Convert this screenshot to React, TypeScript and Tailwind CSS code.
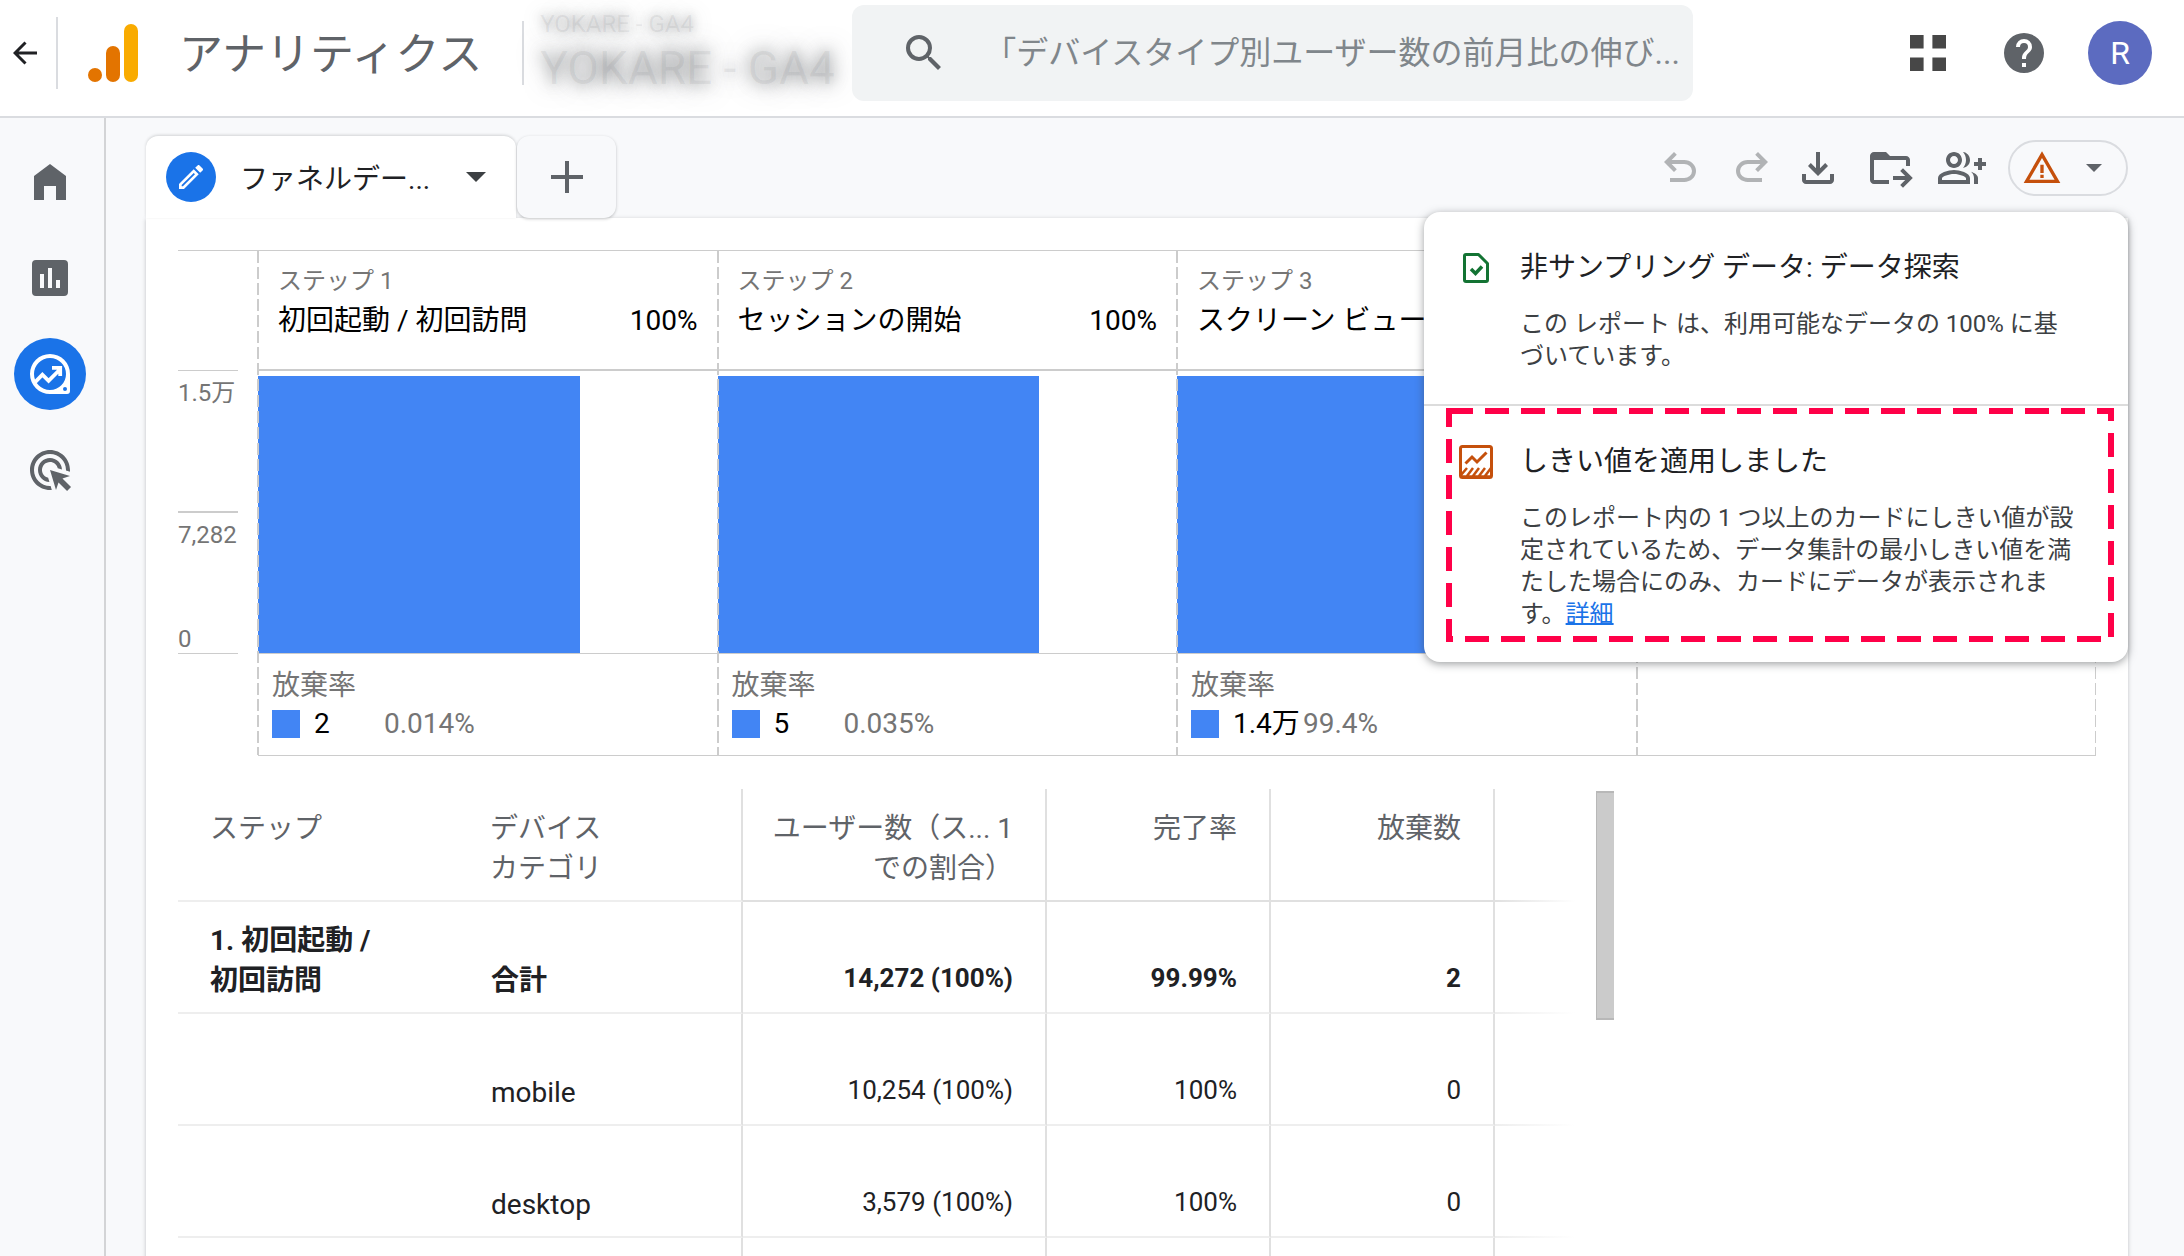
import React from 'react';
import clsx from 'clsx';

type IconProps = { d: string; className?: string };

function Icon({ d, className = 'size-12' }: IconProps) {
  return (
    <svg viewBox="0 0 24 24" fill="currentColor" fillRule="evenodd" className={clsx('shrink-0', className)} aria-hidden="true">
      <path d={d} />
    </svg>
  );
}

const paths = {
  search: 'M15.5 14h-.79l-.28-.27A6.47 6.47 0 0 0 16 9.5 6.5 6.5 0 1 0 9.5 16c1.61 0 3.09-.59 4.23-1.57l.27.28v.79l5 4.99L20.49 19zm-6 0a4.5 4.5 0 1 1 0-9 4.5 4.5 0 0 1 0 9z',
  apps: 'M3 3h6.8v6.8H3zM14.2 3H21v6.8h-6.8zM3 14.2h6.8V21H3zM14.2 14.2H21V21h-6.8z',
  help: 'M12 2a10 10 0 1 0 0 20 10 10 0 0 0 0-20zm1 17h-2v-2h2zm2.07-7.75-.9.92C13.45 12.9 13 13.5 13 15h-2v-.5c0-1.1.45-2.1 1.17-2.83l1.24-1.26c.37-.36.59-.86.59-1.41a2 2 0 1 0-4 0H8a4 4 0 1 1 8 0c0 .88-.36 1.68-.93 2.25z',
  home: 'M4 21V9l8-6 8 6v12h-5v-7H9v7z',
  reports: 'M5 3h14a2 2 0 0 1 2 2v14a2 2 0 0 1-2 2H5a2 2 0 0 1-2-2V5a2 2 0 0 1 2-2zm2 7v7h2v-7zm4-3v10h2V7zm4 6v4h2v-4z',
  ads: 'M11.71 17.99C8.53 17.84 6 15.22 6 12c0-3.31 2.69-6 6-6 3.22 0 5.84 2.53 5.99 5.71l-2.1-.63C15.48 9.31 13.89 8 12 8c-2.21 0-4 1.79-4 4 0 1.89 1.31 3.48 3.08 3.89zM22 12c0 .3-.01.6-.04.9l-1.97-.59c.01-.1.01-.21.01-.31 0-4.42-3.58-8-8-8s-8 3.58-8 8 3.58 8 8 8c.1 0 .21 0 .31-.01l.59 1.97c-.3.03-.6.04-.9.04-5.52 0-10-4.48-10-10S6.48 2 12 2s10 4.48 10 10zm-3.77 4.26L22 15l-10-3 3 10 1.26-3.77 4.27 4.27 1.98-1.98z',
  edit: 'M14.06 9.02l.92.92L5.92 19H5v-.92l9.06-9.06M17.66 3c-.25 0-.51.1-.7.29l-1.83 1.83 3.75 3.75 1.83-1.83a.996.996 0 0 0 0-1.41l-2.34-2.34c-.2-.2-.45-.29-.71-.29zm-3.6 3.19L3 17.25V21h3.75L17.81 9.94z',
  plus: 'M11 4h2v7h7v2h-7v7h-2v-7H4v-2h7z',
  undo: 'M7 19v-2h7.1q1.575 0 2.738-1T18 13.5 16.838 11 14.1 10H7.8l2.6 2.6L9 14 4 9l5-5 1.4 1.4L7.8 8h6.3q2.425 0 4.163 1.575T20 13.5t-1.737 3.925T14.1 19z',
  redo: 'M17 19v-2H9.9q-1.575 0-2.738-1T6 13.5 7.162 11 9.9 10h6.3l-2.6 2.6L15 14l5-5-5-5-1.4 1.4L16.2 8H9.9Q7.475 8 5.737 9.575T4 13.5t1.737 3.925T9.9 19z',
  download: 'M12 16l-5-5 1.4-1.45 2.6 2.6V4h2v8.15l2.6-2.6L17 11zm-6 4q-.825 0-1.412-.587T4 18v-3h2v3h12v-3h2v3q0 .825-.587 1.413T18 20z',
  move: 'M11.5 20H4q-.825 0-1.412-.587T2 18V6q0-.825.588-1.412T4 4h6l2 2h8q.825 0 1.413.588T22 8v3h-2V8H4v10h7.5zM18.5 21.9l-1.4-1.4 2.5-2.5h-6.1v-2h6.1l-2.5-2.5 1.4-1.4 4.9 4.9z',
  share: 'M22 9V7h-2v2h-2v2h2v2h2v-2h2V9zM8 12c2.21 0 4-1.79 4-4s-1.79-4-4-4-4 1.79-4 4 1.79 4 4 4zm0-6c1.1 0 2 .9 2 2s-.9 2-2 2-2-.9-2-2 .9-2 2-2zM8 13c-2.67 0-8 1.34-8 4v3h16v-3c0-2.66-5.33-4-8-4zm6 5H2v-.99C2.2 16.29 5.3 15 8 15s5.8 1.29 6 2v1zM12.51 4.05C13.43 5.11 14 6.49 14 8s-.57 2.89-1.49 3.95C14.47 11.7 16 10.04 16 8s-1.53-3.7-3.49-3.95zM16.53 13.83C17.42 14.66 18 15.7 18 17v3h2v-3c0-1.45-1.59-2.51-3.47-3.17z',
  warning: 'M1 21 12 2l11 19zm3.45-2h15.1L12 6zM11 16h2v2h-2zM11 10h2v5h-2z',
};

const steps = [
  { label: 'ステップ 1', name: '初回起動 / 初回訪問', pct: '100%', drop: '2', dropPct: '0.014%' },
  { label: 'ステップ 2', name: 'セッションの開始', pct: '100%', drop: '5', dropPct: '0.035%' },
  { label: 'ステップ 3', name: 'スクリーン ビュー', pct: '', drop: '1.4万', dropPct: '99.4%' },
];

const rows = [
  { step: '1. 初回起動 / 初回訪問', device: '合計', users: '14,272 (100%)', rate: '99.99%', drops: '2', bold: true },
  { step: '', device: 'mobile', users: '10,254 (100%)', rate: '100%', drops: '0' },
  { step: '', device: 'desktop', users: '3,579 (100%)', rate: '100%', drops: '0' },
  { step: '', device: '', users: '', rate: '', drops: '' },
];

function Header() {
  return (
    <header className="flex h-[118px] shrink-0 items-center border-b-2 border-[#dadce0] bg-white pb-2.5 pr-8 pl-[13px]">
      <button aria-label="戻る" className="shrink-0">
        <svg viewBox="0 0 24 24" className="size-6" fill="none" stroke="#202124" strokeWidth="3" aria-hidden="true">
          <path d="M24 12H2.5M12.5 1.5 2 12l10.5 10.5" />
        </svg>
      </button>
      <div className="ml-[19px] h-[72px] w-0.5 shrink-0 bg-[#dadce0]" />
      <svg viewBox="0 0 52 58" className="ml-[29px] h-[58px] w-[52px] shrink-0" aria-hidden="true">
        <rect x="37" y="0" width="14" height="58" rx="7" fill="#f9ab00" />
        <rect x="19" y="22" width="14" height="36" rx="7" fill="#e37400" />
        <circle cx="8" cy="51" r="7" fill="#e37400" />
      </svg>
      <h1 className="ml-10 pt-1 text-[44px] leading-[64px] whitespace-nowrap text-[#5f6368]">アナリティクス</h1>
      <div className="ml-10 h-16 w-0.5 shrink-0 bg-[#dadce0]" />
      <div className="ml-4 w-[312px] shrink-0 self-start pt-1 whitespace-nowrap text-[#5f6368]/10">
        <p className="text-2xl leading-10 [text-shadow:0_0_10px_#5f636860,0_0_20px_#5f636860]">YOKARE - GA4</p>
        <p className="text-[46px] leading-[48px] [text-shadow:0_0_14px_#5f636880,0_0_24px_#5f636880]">YOKARE - GA4</p>
      </div>
      <label className="flex h-24 max-w-[841px] flex-1 items-center rounded-xl bg-[#f1f3f4] pr-3 pl-12 text-[#5f6368]">
        <Icon d={paths.search} />
        <input
          aria-label="検索"
          placeholder="「デバイスタイプ別ユーザー数の前月比の伸び..."
          className="ml-9 min-w-0 flex-1 bg-transparent text-[32px] outline-none placeholder:text-[#80868b]"
        />
      </label>
      <div className="ml-auto flex shrink-0 items-center">
        <button aria-label="アプリ" className="text-[#474747]"><Icon d={paths.apps} /></button>
        <button aria-label="ヘルプ" className="ml-12 text-[#5f6368]"><Icon d={paths.help} /></button>
        <button className="ml-10 size-16 rounded-full bg-[#5c6bc0] text-[32px] text-white">R</button>
      </div>
    </header>
  );
}

function Sidebar() {
  return (
    <nav className="flex w-[106px] shrink-0 flex-col items-center gap-6 border-r-2 border-[#d3d4d6] pt-7 pr-1 text-[#5f6368]">
      <a href="#home" aria-label="ホーム" className="flex size-[72px] items-center justify-center"><Icon d={paths.home} /></a>
      <a href="#reports" aria-label="レポート" className="flex size-[72px] items-center justify-center"><Icon d={paths.reports} /></a>
      <a href="#explore" aria-label="探索" className="flex size-[72px] items-center justify-center rounded-full bg-[#1a73e8] text-white">
        <svg viewBox="0 0 24 24" className="size-12" aria-hidden="true">
          <path
            fill="currentColor"
            fillRule="evenodd"
            d="M12 2a10 10 0 1 0 0 20h8.5a1.5 1.5 0 0 0 1.5-1.5V12A10 10 0 0 0 12 2zm0 2a8 8 0 1 1 0 16 8 8 0 0 1 0-16zm7.5 14.5a1 1 0 1 1 0 2 1 1 0 0 1 0-2z"
          />
          <path fill="none" stroke="currentColor" strokeWidth="1.9" d="m4.2 16.4 4-4.1 3.1 3.1 5.4-5.4M13 8.9h4.1V13" />
          <path fill="currentColor" d="M14 8h4v4z" />
        </svg>
      </a>
      <a href="#ads" aria-label="広告" className="flex size-[72px] items-center justify-center"><Icon d={paths.ads} /></a>
    </nav>
  );
}

function QualityPopover() {
  return (
    <div className="absolute top-full right-0 z-20 mt-4 w-[704px] rounded-2xl bg-white shadow-[0_2px_8px_rgba(60,64,67,0.5)]">
      <section className="flex gap-6 px-8 pt-9 pb-8">
        <svg viewBox="0 0 40 40" className="size-10 shrink-0" fill="none" stroke="#137333" aria-hidden="true">
          <path strokeWidth="3" strokeLinejoin="round" d="M10 6.5h12.500l9 9V32a1.500 1.500 0 0 1-1.500 1.500H10A1.500 1.500 0 0 1 8.500 32V8A1.500 1.500 0 0 1 10 6.500z" />
          <path strokeWidth="3.500" d="m15 21 4.500 4.500 6.500-7" />
        </svg>
        <div className="w-[560px]">
          <h2 className="text-[28px] leading-10 text-[#202124]">非サンプリング データ: データ探索</h2>
          <p className="mt-5 text-2xl leading-8 text-[#3c4043]">この レポート は、利用可能なデータの 100% に基づいています。</p>
        </div>
      </section>
      <section className="relative flex gap-6 border-t-2 border-[#dcdcdc] px-8 pt-9 pb-8">
        <svg viewBox="0 0 40 40" className="size-10 shrink-0" fill="none" stroke="#c5500c" aria-hidden="true">
          <rect x="4.500" y="4.500" width="31" height="31" rx="2" strokeWidth="3" />
          <path strokeWidth="3" d="m9.500 21.500 6.500-6.500 5 5 9.500-9.500" />
          <path strokeWidth="2.500" d="m5 33 6-7M11 34l6-8M17 34l6-8M23 34l6-8M29 34l6-8M5 34.500h30" />
        </svg>
        <div className="w-[560px]">
          <h2 className="text-[28px] leading-10 text-[#202124]">しきい値を適用しました</h2>
          <p className="mt-5 text-2xl leading-8 text-[#3c4043]">
            このレポート内の 1 つ以上のカードにしきい値が設定されているため、データ集計の最小しきい値を満たした場合にのみ、カードにデータが表示されます。<a href="#detail" className="text-[#1a73e8] underline decoration-2">詳細</a>
          </p>
        </div>
        {/* highlight frame */}
        <svg viewBox="0 0 668 234" className="pointer-events-none absolute top-0.5 left-[22px] h-[234px] w-[668px]" aria-hidden="true">
          <path d="M3 3h662v228H3z" fill="none" stroke="#ff0048" strokeWidth="6" strokeDasharray="24 12" />
        </svg>
      </section>
    </div>
  );
}

function Toolbar() {
  return (
    <div className="mt-1 flex h-14 items-center gap-6 text-[#5f6368]">
      <div className="-mr-1.5 flex gap-6 text-[#b1b3b5]">
        <button aria-label="元に戻す"><Icon d={paths.undo} /></button>
        <button aria-label="やり直す"><Icon d={paths.redo} /></button>
      </div>
      <button aria-label="ダウンロード"><Icon d={paths.download} /></button>
      <button aria-label="移動"><Icon d={paths.move} /></button>
      <button aria-label="共有"><Icon d={paths.share} /></button>
      <div className="relative -ml-0.5">
        <button aria-label="データの品質" className="flex h-14 w-[120px] items-center rounded-full border-2 border-[#dadce0] pl-3">
          <Icon d={paths.warning} className="size-10 text-[#c5500c]" />
          <svg viewBox="0 0 16 8" className="ml-6 h-2 w-4" fill="currentColor" aria-hidden="true"><path d="M0 0h16L8 8z" /></svg>
        </button>
        <QualityPopover />
      </div>
    </div>
  );
}

function Dashes({ className }: { className: string }) {
  return (
    <div
      className={clsx(
        'absolute inset-y-0 bg-[repeating-linear-gradient(180deg,#cccccc_0_12px,transparent_12px_16px)]',
        className,
      )}
    />
  );
}

function FunnelChart() {
  return (
    <div className="flex border-t border-[#cccccc]">
      <div className="w-20 shrink-0 pt-[119px] text-2xl leading-8 text-[#757575]">
        <div className="h-[141px] w-[60px] border-t border-[#cccccc] pt-1.5">1.5万</div>
        <div className="flex h-[143px] w-[60px] flex-col justify-between border-t-2 border-b border-[#cccccc] pt-1.5">
          <span>7,282</span>
          <span className="leading-7">0</span>
        </div>
      </div>
      <div className="relative grid flex-1 grid-cols-4 border-b border-[#cccccc]">
        {[0, 1, 2, 3].map((i) => {
          const step = steps[i];
          return (
            <div key={i} className="relative">
              <div className="h-[120px] border-b-2 border-[#cccccc] px-5 pt-3.5">
                {step && (
                  <>
                    <p className="text-2xl leading-8 text-[#757575]">{step.label}</p>
                    <div className="mt-1 flex justify-between text-[28px] leading-10 whitespace-nowrap text-black">
                      <span>{step.name}</span>
                      <span>{step.pct}</span>
                    </div>
                  </>
                )}
              </div>
              <div className="h-[283px] border-b border-[#cccccc] pt-[5px]">
                {step && <div className="h-full w-[70%] bg-[#4285f4]" />}
              </div>
              <div className="h-[101px] pt-3 pl-3.5 text-[28px] leading-10 text-[#757575]">
                {step && (
                  <>
                    <p>放棄率</p>
                    <div className="flex items-center whitespace-nowrap leading-9">
                      <span className="mr-3.5 size-7 bg-[#4285f4]" />
                      <span className="w-[70px] text-black">{step.drop}</span>
                      <span>{step.dropPct}</span>
                    </div>
                  </>
                )}
              </div>
              <Dashes className="-left-px w-0.5" />
            </div>
          );
        })}
        <Dashes className="right-0 w-px" />
      </div>
    </div>
  );
}

function FunnelTable() {
  const line = 'border-b-2 border-b-[#eeeeee]';
  const split = 'border-r-2 border-r-[#e0e0e0]';
  return (
    <div className="mt-[33px] flex items-start">
      <table className="w-[1397px] table-fixed border-separate border-spacing-0 text-[28px] leading-10 text-[#202124]">
        <colgroup>
          <col className="w-[280px]" />
          <col className="w-[285px]" />
          <col className="w-[304px]" />
          <col className="w-[224px]" />
          <col className="w-[224px]" />
          <col className="w-20" />
        </colgroup>
        <thead>
          <tr className="h-[113px] align-top text-[#5f6368]">
            <th scope="col" className={clsx(line, 'pt-5 pl-8 text-left font-normal')}>ステップ</th>
            <th scope="col" className={clsx(line, split, 'pt-5 pl-8 text-left font-normal')}>デバイス<br />カテゴリ</th>
            <th scope="col" className={clsx(split, 'border-b-2 border-b-[#e0e0e0] pt-5 pr-8 text-right font-normal')}>
              ユーザー数（ス... 1<br />での割合）
            </th>
            <th scope="col" className={clsx(split, 'border-b-2 border-b-[#e0e0e0] pt-5 pr-8 text-right font-normal')}>完了率</th>
            <th scope="col" className={clsx(split, 'border-b-2 border-b-[#e0e0e0] pt-5 pr-8 text-right font-normal')}>放棄数</th>
            <td className="bg-[linear-gradient(90deg,#e0e0e0,#ffffff)] bg-[length:100%_2px] bg-bottom bg-no-repeat" />
          </tr>
        </thead>
        <tbody>
          {rows.map((row, i) => (
            <tr key={i} className={clsx('h-28 align-bottom', row.bold && 'font-bold')}>
              <td className={clsx(line, 'pr-20 pb-[11px] pl-8')}>{row.step}</td>
              <td className={clsx(line, split, 'pb-[11px] pl-[33px]')}>{row.device}</td>
              <td className={clsx(line, split, 'pr-8 pb-3.5 text-right text-[26px]')}>{row.users}</td>
              <td className={clsx(line, split, 'pr-8 pb-3.5 text-right text-[26px]')}>{row.rate}</td>
              <td className={clsx(line, split, 'pr-8 pb-3.5 text-right text-[26px]')}>{row.drops}</td>
              <td className="bg-[linear-gradient(90deg,#eeeeee,#ffffff)] bg-[length:100%_2px] bg-bottom bg-no-repeat" />
            </tr>
          ))}
        </tbody>
      </table>
      <div className="mt-0.5 ml-[21px] h-[229px] w-[18px] border-y-2 border-l border-[#b8b8b8] bg-[#cbcbcb]" />
    </div>
  );
}

export default function App() {
  return (
    <div className="flex h-screen flex-col overflow-hidden bg-[#f8f9fb] font-['Roboto','Noto_Sans_CJK_JP',sans-serif]" lang="ja">
      <Header />
      <div className="flex min-h-0 flex-1">
        <Sidebar />
        <main className="flex min-w-0 flex-1 flex-col pt-[18px] pr-14 pl-10">
          <div className="relative z-10 flex h-[82px] shrink-0 justify-between">
            <div className="flex">
              <div className="flex w-[370px] items-center rounded-t-xl bg-white pl-5 shadow-[0_-1px_3px_rgba(60,64,67,0.2)]">
                <span className="flex size-[50px] items-center justify-center rounded-full bg-[#1a73e8] text-white">
                  <Icon d={paths.edit} className="size-8" />
                </span>
                <span className="ml-6 pt-1.5 text-[28px] leading-10 whitespace-nowrap text-[#202124]">ファネルデー...</span>
                <button aria-label="タブのメニュー" className="ml-auto mr-[30px] text-[#3c4043]">
                  <svg viewBox="0 0 20 10" className="h-2.5 w-5" fill="currentColor" aria-hidden="true"><path d="M0 0h20L10 10z" /></svg>
                </button>
              </div>
              <button aria-label="タブを追加" className="ml-px flex w-[99px] items-center justify-center rounded-xl bg-[#f8f9fb] text-[#5f6368] shadow-[0_1px_3px_rgba(60,64,67,0.3)]">
                <Icon d={paths.plus} />
              </button>
            </div>
            <Toolbar />
          </div>
          <div className="flex-1 bg-white px-8 pt-8 shadow-[0_1px_4px_rgba(60,64,67,0.3)]">
            <FunnelChart />
            <FunnelTable />
          </div>
        </main>
      </div>
    </div>
  );
}
